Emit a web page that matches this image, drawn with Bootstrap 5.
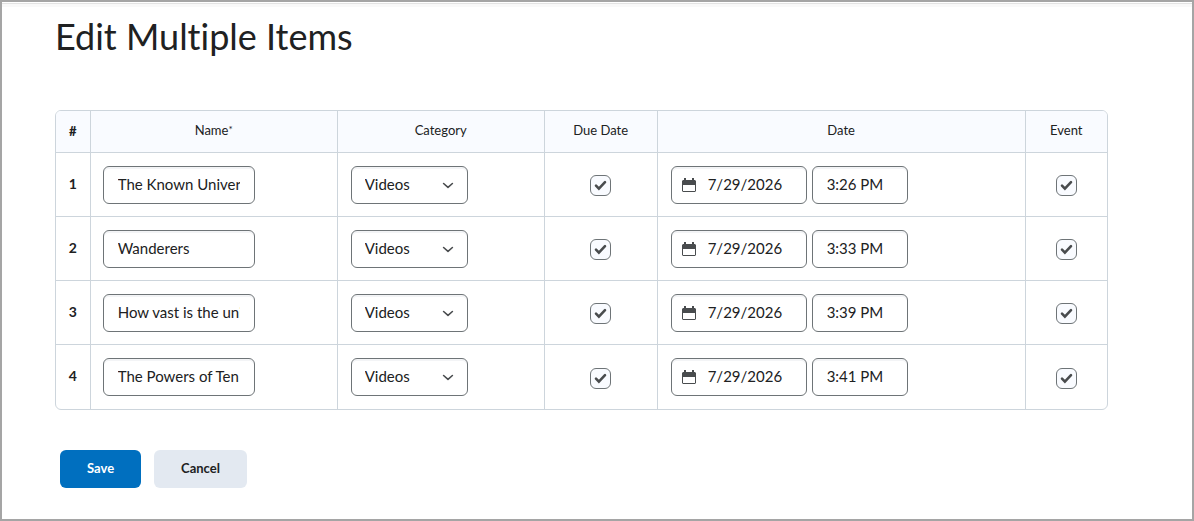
<!DOCTYPE html>
<html lang="en">
<head>
<meta charset="utf-8">
<meta name="viewport" content="width=device-width, initial-scale=1">
<title>Edit Multiple Items</title>
<link href="https://cdn.jsdelivr.net/npm/bootstrap@5.3.0/dist/css/bootstrap.min.css" rel="stylesheet">
<style>
  body { font-family: Lato, sans-serif; color: #202122; font-size: 14px; line-height: 20px; font-variant-ligatures: none; }
  .page-frame { border: 2px solid #a5a5a5; padding: 0 84px 30px 53px; }
  .top-rule { height: 5px; margin: 0 -84px 0 -53px; border-top: 1px solid #fff; background: #f9f9f9; box-shadow: inset 0 1px #e3e3e3; }
  h1 { font-size: 36px; line-height: 44px; font-weight: 400; margin: 7px 0 52px; }
  .items-table { table-layout: fixed; border-collapse: separate; border-spacing: 0; border: 1px solid #cdd5dc; border-radius: 6px; margin-bottom: 40px; color: inherit; }
  .items-table th, .items-table td { padding: 0 13px; border-width: 0 1px 1px 0; border-style: solid; border-color: #cdd5dc; vertical-align: middle; height: 64px; color: inherit; background: none; box-shadow: none; }
  .items-table thead th { height: 42px; font-size: 13px; font-weight: 400; background: #f9fbff; text-align: center; padding-bottom: 3px; }
  .items-table tr > :last-child { border-right: 0; }
  .items-table tbody tr:last-child > * { border-bottom: 0; }
  .items-table thead th:first-child, .items-table tbody th { padding: 0 0 2px; text-align: center; font-weight: 700; }
  .items-table thead th:first-child { border-top-left-radius: 5px; }
  .items-table thead th:last-child { border-top-right-radius: 5px; }
  .required-mark { font-size: 10px; line-height: 1; vertical-align: 2px; }
  .items-table td.name-cell { padding-left: 12px; }
  .items-table .form-control, .items-table .form-select { height: 38px; border: 1px solid #6e7477; border-radius: 6px; box-shadow: inset 0 2px #f3f4f6; font-size: 15px; line-height: 20px; color: #202122; background-color: #fff; padding: 7px 14px 9px; }
  .items-table .form-select { width: 117px; padding-right: 36px; padding-left: 13px; background-size: 12px 12px; background-position: right 13px center;
    background-image: url("data:image/svg+xml,%3Csvg xmlns='http://www.w3.org/2000/svg' viewBox='0 0 12 12'%3E%3Cpath d='M1.6 4.5L6 8.3l4.4-3.8' fill='none' stroke='%23494c4e' stroke-width='1.6' stroke-linecap='round' stroke-linejoin='round'/%3E%3C/svg%3E"); }
  .items-table .name-input { width: 152px; }
  .items-table .date-input { width: 136px; padding-left: 36px; padding-right: 8px; background-repeat: no-repeat; background-size: 14px 14px; background-position: 10px 11px;
    background-image: url("data:image/svg+xml,%3Csvg xmlns='http://www.w3.org/2000/svg' viewBox='0 0 14 14'%3E%3Cpath fill='%23494c4e' fill-rule='evenodd' d='M2 0h2v2h6V0h2v2h1l1 1v10l-1 1H1l-1-1V3l1-1h1zM1 7v6h12V7z'/%3E%3C/svg%3E"); }
  .items-table .time-input { width: 96px; }
  .date-pair { gap: 5px; }
  .items-table .form-check-input { display: block; float: none; width: 21px; height: 21px; margin: 2px auto 0; border: 1px solid #6e7477; border-radius: 6px; background-color: #f9fbff; background-size: 15px 15px; }
  .items-table .form-check-input:checked { background-image: url("data:image/svg+xml,%3Csvg xmlns='http://www.w3.org/2000/svg' viewBox='0 0 15 15'%3E%3Cpath d='M3 7.6l2.9 3 6.1-6.4' fill='none' stroke='%23494c4e' stroke-width='2.6' stroke-linecap='round' stroke-linejoin='miter'/%3E%3C/svg%3E"); }
  .form-actions { padding-left: 5px; gap: 13px; }
  .form-actions .btn { height: 38px; border: 0; border-radius: 6px; font-size: 13px; line-height: 20px; font-weight: 700; padding: 8px 27px 10px; }
  .form-actions .btn-save { background: #006fbf; color: #fff; }
  .form-actions .btn-cancel { background: #e3e9f1; color: #202122; }
</style>
</head>
<body>
<main class="page-frame min-vh-100">
  <div class="top-rule"></div>
  <h1>Edit Multiple Items</h1>
  <form>
    <table class="table items-table">
      <colgroup>
        <col style="width:3.3%"><col style="width:23.5%"><col style="width:19.7%"><col style="width:10.75%"><col style="width:35%"><col style="width:7.75%">
      </colgroup>
      <thead>
        <tr><th scope="col"><b>#</b></th><th scope="col">Name<span class="required-mark">*</span></th><th scope="col">Category</th><th scope="col">Due Date</th><th scope="col">Date</th><th scope="col">Event</th></tr>
      </thead>
      <tbody>
        <tr>
          <th scope="row">1</th>
          <td class="name-cell"><input type="text" class="form-control name-input" aria-label="Name 1" value="The Known Universe"></td>
          <td><select class="form-select" aria-label="Category 1"><option>Videos</option></select></td>
          <td><input type="checkbox" class="form-check-input" aria-label="Due date 1" checked></td>
          <td><div class="d-flex date-pair"><input type="text" class="form-control date-input" aria-label="Date 1" value="7/29/2026"><input type="text" class="form-control time-input" aria-label="Time 1" value="3:26 PM"></div></td>
          <td><input type="checkbox" class="form-check-input" aria-label="Event 1" checked></td>
        </tr>
        <tr>
          <th scope="row">2</th>
          <td class="name-cell"><input type="text" class="form-control name-input" aria-label="Name 2" value="Wanderers"></td>
          <td><select class="form-select" aria-label="Category 2"><option>Videos</option></select></td>
          <td><input type="checkbox" class="form-check-input" aria-label="Due date 2" checked></td>
          <td><div class="d-flex date-pair"><input type="text" class="form-control date-input" aria-label="Date 2" value="7/29/2026"><input type="text" class="form-control time-input" aria-label="Time 2" value="3:33 PM"></div></td>
          <td><input type="checkbox" class="form-check-input" aria-label="Event 2" checked></td>
        </tr>
        <tr>
          <th scope="row">3</th>
          <td class="name-cell"><input type="text" class="form-control name-input" aria-label="Name 3" value="How vast is the universe"></td>
          <td><select class="form-select" aria-label="Category 3"><option>Videos</option></select></td>
          <td><input type="checkbox" class="form-check-input" aria-label="Due date 3" checked></td>
          <td><div class="d-flex date-pair"><input type="text" class="form-control date-input" aria-label="Date 3" value="7/29/2026"><input type="text" class="form-control time-input" aria-label="Time 3" value="3:39 PM"></div></td>
          <td><input type="checkbox" class="form-check-input" aria-label="Event 3" checked></td>
        </tr>
        <tr>
          <th scope="row">4</th>
          <td class="name-cell"><input type="text" class="form-control name-input" aria-label="Name 4" value="The Powers of Ten"></td>
          <td><select class="form-select" aria-label="Category 4"><option>Videos</option></select></td>
          <td><input type="checkbox" class="form-check-input" aria-label="Due date 4" checked></td>
          <td><div class="d-flex date-pair"><input type="text" class="form-control date-input" aria-label="Date 4" value="7/29/2026"><input type="text" class="form-control time-input" aria-label="Time 4" value="3:41 PM"></div></td>
          <td><input type="checkbox" class="form-check-input" aria-label="Event 4" checked></td>
        </tr>
      </tbody>
    </table>
    <div class="d-flex form-actions">
      <button type="button" class="btn btn-save">Save</button>
      <button type="button" class="btn btn-cancel">Cancel</button>
    </div>
  </form>
</main>
<script src="https://cdn.jsdelivr.net/npm/bootstrap@5.3.0/dist/js/bootstrap.bundle.min.js"></script>
</body>
</html>
